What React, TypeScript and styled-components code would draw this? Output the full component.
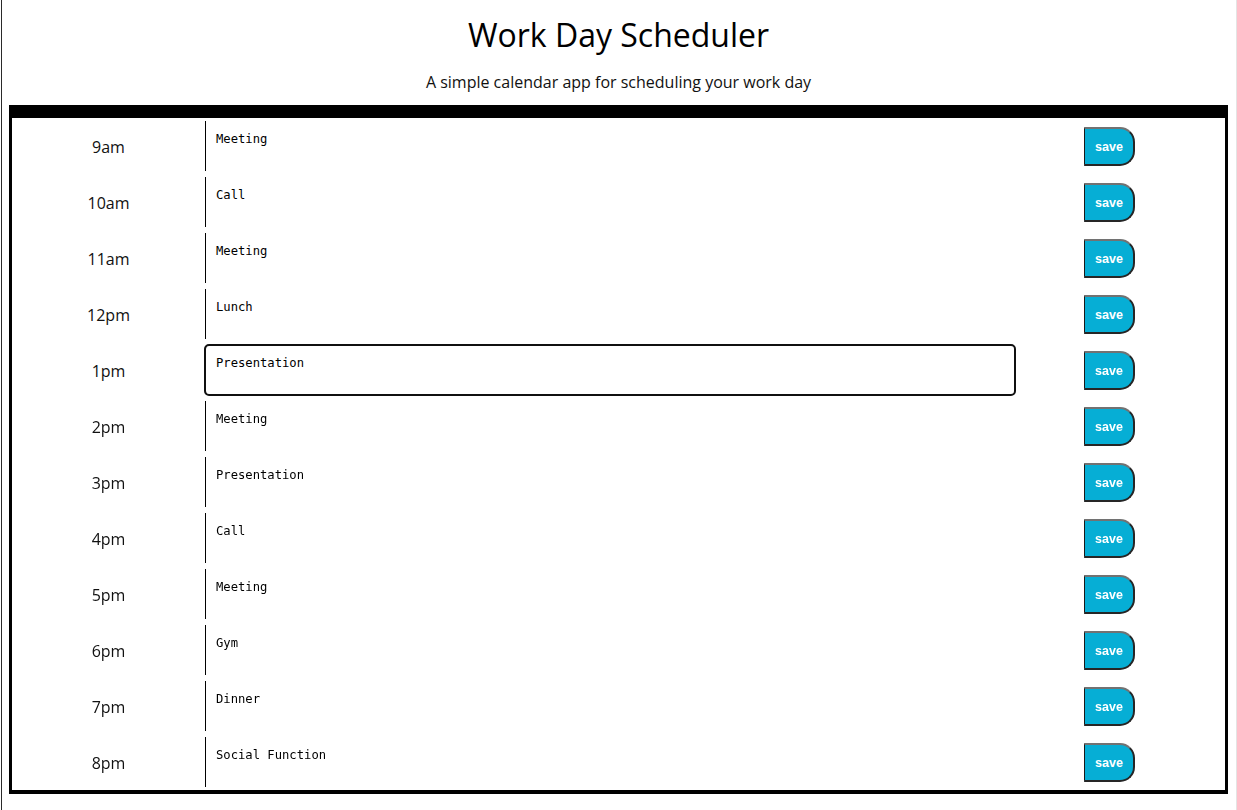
import React, { useEffect, useRef } from "react";
import styled, { createGlobalStyle } from "styled-components";

const GlobalStyle = createGlobalStyle`
  html, body { margin: 0; padding: 0; background: #fff; }
  body { font-family: "Open Sans", "Noto Sans", sans-serif; color: #000; }
  * { box-sizing: border-box; }
`;

const Page = styled.div`
  margin-left: 1px;
  border-left: 1px solid #2a2a2a;
  border-right: 1px solid #e4e4e4;
  min-height: 100vh;
  padding: 0 8px 0 7px;
`;

const Header = styled.header`
  padding-top: 15px;
  text-align: center;
`;

const Title = styled.h1`
  margin: 0;
  font-size: 32px;
  font-weight: 400;
  line-height: 39px;
  color: #000;
`;

const Lead = styled.p`
  margin: 16px 0 11px;
  font-size: 16px;
  line-height: 24px;
  color: #111;
`;

const Schedule = styled.main`
  border: 3px solid #000;
  border-top-width: 13px;
  border-bottom-width: 4px;
`;

const Row = styled.div`
  display: grid;
  grid-template-columns: 193px 810px 1fr;
  align-items: center;
  padding: 3px 0;
  height: 56px;
`;

const Hour = styled.div`
  text-align: center;
  font-size: 16px;
  line-height: 22px;
  padding-top: 2px;
  color: #111;
`;

const Note = styled.textarea`
  display: block;
  height: 50px;
  width: 810px;
  resize: none;
  border: none;
  border-left: 1px solid #000;
  border-radius: 0;
  padding: 11px 10px 9px;
  font-family: "DejaVu Sans Mono", "Liberation Mono", monospace;
  font-size: 12.2px;
  color: #000;
  background: #fff;
  caret-color: #000;
  outline: none;
  &:focus {
    outline: 2px solid #101010;
    outline-offset: -1px;
    border-radius: 4px;
  }
`;

const SaveCell = styled.div`
  padding-left: 69px;
  display: flex;
  align-items: center;
`;

const SaveButton = styled.button`
  width: 51px;
  height: 39px;
  margin-top: 1px;
  background: #06aed5;
  color: #fff;
  font-family: "Liberation Sans", Arial, sans-serif;
  font-size: 12.5px;
  font-weight: 700;
  border-style: solid;
  border-width: 2px 2px 2px 1px;
  border-color: #727272 #262626 #262626 #1a1a1a;
  border-radius: 0 15px 15px 0;
  padding: 0;
  cursor: pointer;
`;

const slots: { hour: string; text: string; focused?: boolean }[] = [
  { hour: "9am", text: "Meeting" },
  { hour: "10am", text: "Call" },
  { hour: "11am", text: "Meeting" },
  { hour: "12pm", text: "Lunch" },
  { hour: "1pm", text: "Presentation", focused: true },
  { hour: "2pm", text: "Meeting" },
  { hour: "3pm", text: "Presentation" },
  { hour: "4pm", text: "Call" },
  { hour: "5pm", text: "Meeting" },
  { hour: "6pm", text: "Gym" },
  { hour: "7pm", text: "Dinner" },
  { hour: "8pm", text: "Social Function" },
];

export default function App() {
  const focusRef = useRef<HTMLTextAreaElement>(null);
  useEffect(() => {
    const el = focusRef.current;
    if (el) {
      el.focus();
      const n = el.value.length;
      el.setSelectionRange(n, n);
    }
  }, []);

  return (
    <>
      <GlobalStyle />
      <Page>
        <Header>
          <Title>Work Day Scheduler</Title>
          <Lead>A simple calendar app for scheduling your work day</Lead>
        </Header>
        <Schedule>
          {slots.map((s) => (
            <Row key={s.hour}>
              <Hour>{s.hour}</Hour>
              <Note
                defaultValue={s.text}
                ref={s.focused ? focusRef : undefined}
              />
              <SaveCell>
                <SaveButton>save</SaveButton>
              </SaveCell>
            </Row>
          ))}
        </Schedule>
      </Page>
    </>
  );
}
